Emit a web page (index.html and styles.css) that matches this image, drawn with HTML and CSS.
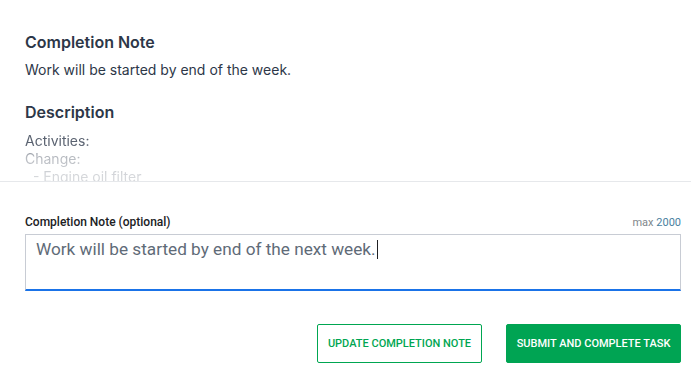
FILE: index.html
```html
<!DOCTYPE html>
<html lang="en">
    <head>
        <meta charset="UTF-8">
        <meta name="viewport" content="width=device-width, initial-scale=1.0">
        <title>Complete Task</title>
        <link rel="stylesheet" href="styles.css">
    </head>

    <body>
        <div class="details">
            <h2 class="section-title">Completion Note</h2>
            <p class="section-text">Work will be started by end of the week.</p>

            <h2 class="section-title description-title">Description</h2>
            <div class="description">
                <div>Activities:</div>
                <div>Change:</div>
                <div>&nbsp; - Engine oil filter</div>
            </div>
        </div>

        <div class="form">
            <div class="form-label">
                <label for="note">Completion Note (optional)</label>
                <span class="max-length">max <span class="max-value">2000</span></span>
            </div>
            <div class="note-input" id="note" contenteditable="true">Work will be started by end of the next week.<span class="caret"></span></div>

            <div class="form-buttons">
                <button class="button button-outline" type="button">Update Completion Note</button>
                <button class="button button-primary" type="button">Submit and Complete Task</button>
            </div>
        </div>
    </body>
</html>
```

FILE: styles.css
```css
body {
    margin: 0;
    background-color: #fff;
    font-family: 'Inter', 'Noto Sans', sans-serif;
    color: #2d3748;
}

.details {
    height: 151px;
    padding: 30px 25px 0;
    overflow: hidden;
    border-bottom: 1px solid #e6e8eb;
}

.section-title {
    margin: 0;
    font-size: 16px;
    font-weight: 600;
    line-height: 24px;
    color: #2d3748;
}

.section-text {
    margin: 6px 0 0;
    font-size: 14px;
    line-height: 20px;
    color: #2d3748;
}

.description-title {
    margin-top: 20px;
}

.description {
    margin-top: 8px;
    font-size: 14px;
    line-height: 18px;
    color: #5a6270;
    -webkit-mask-image: linear-gradient(to bottom, #000 0, #000 12px, rgba(0, 0, 0, 0.45) 24px, rgba(0, 0, 0, 0.25) 44px);
    mask-image: linear-gradient(to bottom, #000 0, #000 12px, rgba(0, 0, 0, 0.45) 24px, rgba(0, 0, 0, 0.25) 44px);
}

.form {
    padding: 32px 10px 0 25px;
    font-family: 'Roboto', 'Liberation Sans', sans-serif;
}

.form-label {
    display: flex;
    justify-content: space-between;
    align-items: baseline;
    margin-bottom: 3px;
    line-height: 16px;
}

.form-label label {
    font-size: 12px;
    font-weight: 500;
    color: #202124;
}

.max-length {
    font-size: 11px;
    color: #80868b;
}

.max-value {
    color: #4a7fa0;
}

.note-input {
    box-sizing: border-box;
    height: 57px;
    padding: 4px 10px;
    border: 1px solid #c8ccd4;
    border-bottom: 2px solid #1a73e8;
    font-size: 17.2px;
    line-height: 21px;
    color: #5f6b78;
    outline: none;
}

.caret {
    display: inline-block;
    width: 1px;
    height: 19px;
    margin-left: 1px;
    vertical-align: -4px;
    background-color: #202124;
}

.form-buttons {
    display: flex;
    justify-content: flex-end;
    gap: 24px;
    margin-top: 33px;
}

.button {
    height: 39px;
    padding: 0;
    border-radius: 2px;
    font-family: 'Roboto', 'Liberation Sans', sans-serif;
    font-size: 11px;
    font-weight: 500;
    text-transform: uppercase;
    white-space: nowrap;
    cursor: pointer;
}

.button-outline {
    width: 165px;
    border: 1px solid #00a651;
    background-color: #fff;
    color: #00a651;
}

.button-primary {
    width: 175px;
    border: 1px solid #00a453;
    background-color: #00a453;
    color: #fff;
}
```
